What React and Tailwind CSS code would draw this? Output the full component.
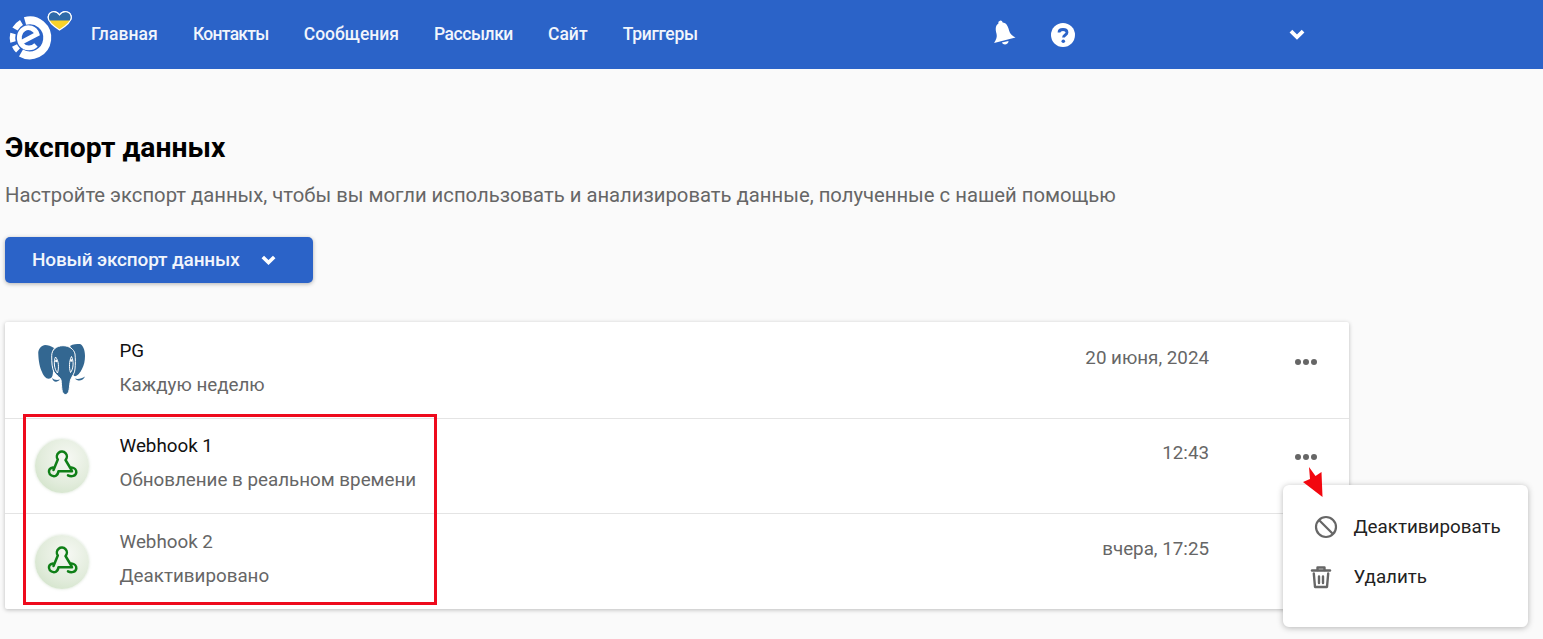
const font = { fontFamily: 'Roboto, "Liberation Sans", sans-serif' };

function Logo() {
  return (
    <svg width="72" height="60" viewBox="0 5 72 60" className="shrink-0">
      <defs>
        <clipPath id="heartTop"><rect x="44" y="6" width="32" height="13.500" /></clipPath>
      </defs>
      <g fill="none" stroke="#fff" strokeLinecap="butt">
        <path d="M25 20 A17.500 17.500 0 1 1 21 52" strokeWidth="8" />
        <path d="M21.500 21.500 A17.500 17.500 0 0 0 15 28" strokeWidth="6" />
        <path d="M13 32.500 A17.500 17.500 0 0 0 13 41" strokeWidth="5.500" />
        <path d="M14.500 44.500 A17.500 17.500 0 0 0 18 49.500" strokeWidth="5.500" />
        <path d="M22 41 L37 33 C35 27 28 25 24 28 C19 31 18 38 21 43 C25 48 32 48 36 44" strokeWidth="4.800" />
      </g>
      <path d="M59.500 29 C50 23 47.500 18 48.500 15 C49.500 10 56 9 59.500 14 C63 9 70 10 71 15 C72 18 69 23 59.500 29 Z" fill="#f7d22a" stroke="#fff" strokeWidth="1.200" />
      <path d="M59.500 29 C50 23 47.500 18 48.500 15 C49.500 10 56 9 59.500 14 C63 9 70 10 71 15 C72 18 69 23 59.500 29 Z" fill="#2f6aa8" stroke="#fff" strokeWidth="1.200" clipPath="url(#heartTop)" />
    </svg>
  );
}

function Bell() {
  return (
    <svg width="26" height="28" viewBox="0 0 26 28">
      <g transform="rotate(-14 13 14)" fill="#fff">
        <circle cx="13" cy="3.500" r="2.200" />
        <path d="M13 3.500 C7 3.500 6.500 9 6.500 13 C6.500 17 4.500 19 2 21.500 L24 21.500 C21.500 19 19.500 17 19.500 13 C19.500 9 19 3.500 13 3.500 Z" />
        <path d="M9.500 23 C10.500 26.500 15.500 26.500 16.500 23 Z" />
      </g>
    </svg>
  );
}

function Help() {
  return (
    <svg width="24" height="24" viewBox="0 0 24 24">
      <circle cx="12" cy="12" r="12" fill="#fff" />
      <path d="M8 9.500 C8 5.500 16 5.500 16 9.500 C16 12 12.500 12 12.500 14.500" fill="none" stroke="#2b63c8" strokeWidth="2.800" />
      <circle cx="12.300" cy="18.300" r="1.800" fill="#2b63c8" />
    </svg>
  );
}

function Chevron({ w = 15 }) {
  return (
    <svg width={w} height={w * 0.67} viewBox="0 0 15 10">
      <path d="M1.800 2 L7.500 7.500 L13.200 2" fill="none" stroke="#fff" strokeWidth="3.600" />
    </svg>
  );
}

function Elephant() {
  return (
    <svg width="52" height="52" viewBox="0 0 52 52">
      <path d="M9 1 C4 2 2 6 2.300 10 C2.500 17 4 24 6 28 C8 33 11 36 15 34 C18 32 17 24 16 15 C16 10 16 7 18 4 C15 2 12 1 9 1 Z" fill="#336791" />
      <path d="M44 0 C47 1 49 6 49 12 C49 17 48 21 46 25 C44 29 41 33 38 32 C36 30 38 20 38 12 C38 8 36 5 34 2 C37 0 41 0 44 0 Z" fill="#336791" />
      <path d="M16 34 C18 36 21 36.500 24 35.500 C21 39 17 38 16 34 Z M39 34.500 C42 35.500 46 34.500 49 32.500 C47 37 42 38 39 34.500 Z" fill="#336791" />
      <path d="M27 1.700 C20 1.700 15.700 6 15.700 11.700 C15.700 19 16 24 18 28 C21 32 24 33 25 36 C26 42 25 50.500 29.500 50.500 C34 50.500 33 42 34.500 36 C36 32 39 29 39 25 C39.500 20 39.500 15 39 10 C38 5 33 1.700 27 1.700 Z" fill="#336791" stroke="#fff" strokeWidth="1" />
      <path d="M19.500 13 C17.500 17 18 25 21.500 29 C23 24 23 17 19.500 13 Z" fill="none" stroke="#fff" strokeWidth="1" />
      <path d="M35.500 12.500 C38 17 37.500 25 34.500 28.500 C33 24 33 17 35.500 12.500 Z" fill="none" stroke="#fff" strokeWidth="1" />
      <circle cx="20.300" cy="17" r="1.200" fill="#fff" />
      <circle cx="35.300" cy="16.500" r="1.200" fill="#fff" />
    </svg>
  );
}

function WebhookIcon() {
  return (
    <div className="w-[54px] h-[54px] rounded-full bg-[radial-gradient(circle_at_60%_35%,#f6f8f3,#e2ecdc_55%,#cadfc1_100%)] flex items-center justify-center shadow-[0_0_3px_rgba(150,180,140,0.4)]">
      <svg width="32" height="32" viewBox="-1 -1 32 32" fill="none" stroke="#0f7f17" strokeWidth="2.500" strokeLinecap="round" strokeLinejoin="round">
        <path d="M6.500 19 L10.800 8.500 A5 5 0 1 1 18.500 9 L24.500 19" />
        <path d="M6 16.500 C3 17 1.800 19 2 21 C2.400 24.300 6 25.800 8.700 24.800 C10.400 24 11.200 22.300 11.500 20.300 L25 20.300" />
        <path d="M24.500 16.500 C27.500 16.800 29.500 19 29.300 21.300 C29 24.800 24.500 26.300 21 24.300" />
      </svg>
    </div>
  );
}

function Dots() {
  return (
    <div className="flex gap-[2.500px] w-[22px]">
      <span className="w-[6px] h-[6px] rounded-full bg-[#666]" />
      <span className="w-[6px] h-[6px] rounded-full bg-[#666]" />
      <span className="w-[6px] h-[6px] rounded-full bg-[#666]" />
    </div>
  );
}

function Row({ icon, title, titleClass, sub, date, rowClass, textPad, datePad, dotsTop }) {
  return (
    <div className={`flex ${rowClass}`}>
      <div className="w-[115px] shrink-0 flex items-center pl-[30px]">{icon}</div>
      <div className={`flex-1 ${textPad}`}>
        <div className={`text-[18.800px] leading-[22px] -ml-[0.5px] ${titleClass}`}>{title}</div>
        <div className="text-[18.800px] leading-[22px] mt-[12px] -ml-[0.5px] text-[#666]">{sub}</div>
      </div>
      <div className={`${datePad} pr-[140px] text-[18.800px] leading-[22px] text-[#666] flex items-start relative`}>
        {date}
        <div className={`absolute right-[32px] ${dotsTop}`}><Dots /></div>
      </div>
    </div>
  );
}

export default function App() {
  const nav = [
    ['Главная', 'tracking-[0.1px]'],
    ['Контакты', 'tracking-[-0.7px]'],
    ['Сообщения', 'tracking-[0px]'],
    ['Рассылки', 'tracking-[-0.45px]'],
    ['Сайт', 'tracking-[0.05px]'],
    ['Триггеры', 'tracking-[-0.3px]'],
  ];
  return (
    <div style={font} className="relative h-[639px] w-[1543px] overflow-hidden bg-[#fafafa]">
      <header className="h-[69px] bg-[#2b63c8] flex items-center">
        <div className="w-[91px] shrink-0 pt-[2px]"><Logo /></div>
        <nav className="flex gap-[35px] w-[902px] shrink-0">
          {nav.map(([n, t]) => (
            <span key={n} className={`text-[17.500px] font-medium text-[#f1f5fc] ${t}`}>{n}</span>
          ))}
        </nav>
        <div className="w-[46px] shrink-0 flex justify-start -translate-y-[2px] -translate-x-[3px]"><Bell /></div>
        <div className="w-[238px] ml-[12px] shrink-0"><Help /></div>
        <Chevron w={16} />
      </header>

      <main className="pl-[5px] w-[1349px]">
        <h1 className="mt-[62px] text-[28.300px] leading-[34px] font-bold text-black">Экспорт данных</h1>
        <p className="mt-[18px] text-[20.250px] leading-[24px] text-[#666]">
          Настройте экспорт данных, чтобы вы могли использовать и анализировать данные, полученные с нашей помощью
        </p>
        <button className="mt-[30px] w-[308px] h-[46px] rounded-[5px] bg-[#2b63c8] shadow-[0_1px_4px_rgba(0,0,0,0.3)] text-[#f1f5fc] font-medium text-[19px] flex items-center pl-[27px] gap-[21.500px]">
          <span className="tracking-[-0.15px]">Новый экспорт данных</span>
          <Chevron />
        </button>

        <section className="mt-[39px] bg-white rounded-[2px] shadow-[0_1px_4px_rgba(0,0,0,0.25)]">
          <Row rowClass="h-[97px] border-b border-[#e4e4e4]" textPad="pt-[18px]" datePad="pt-[25px]" dotsTop="top-[37px]" icon={<div className="ml-[1px]"><Elephant /></div>} title="PG" titleClass="text-[#111]" sub="Каждую неделю" date="20 июня, 2024" />
          <Row rowClass="h-[95px] border-b border-[#e4e4e4]" textPad="pt-[16px]" datePad="pt-[23px]" dotsTop="top-[35px]" icon={<WebhookIcon />} title="Webhook 1" titleClass="text-[#111]" sub="Обновление в реальном времени" date="12:43" />
          <Row rowClass="h-[95px]" textPad="pt-[17px]" datePad="pt-[24px]" dotsTop="top-[35px]" icon={<WebhookIcon />} title="Webhook 2" titleClass="text-[#666]" sub="Деактивировано" date="вчера, 17:25" />
        </section>
      </main>

      <div className="absolute left-[23px] top-[414px] w-[414px] h-[191px] border-[3px] border-[#ee0a1d]" />

      <div className="absolute left-[1283px] top-[485px] w-[245px] h-[142px] bg-white rounded-[6px] shadow-[0_1px_6px_rgba(0,0,0,0.28)] pt-[28px]">
        <div className="flex items-center h-[28px]">
          <svg className="ml-[31px]" width="24" height="24" viewBox="0 0 24 24" fill="none" stroke="#666" strokeWidth="2.200">
            <circle cx="12" cy="12" r="10" />
            <path d="M5 5 L19 19" />
          </svg>
          <span className="ml-[15.500px] text-[18.800px] text-[#222]">Деактивировать</span>
        </div>
        <div className="flex items-center h-[28px] mt-[22px]">
          <svg className="ml-[26px]" width="24" height="24" viewBox="0 0 24 24" fill="none" stroke="#666" strokeWidth="2.400" strokeLinejoin="round" strokeLinecap="round">
            <path d="M3 5.500 H21" />
            <path d="M8.500 5 V2.500 H15.500 V5" />
            <path d="M4.800 8.500 L6 22 H18 L19.200 8.500" />
            <path d="M10 11.500 V18 M14 11.500 V18" />
          </svg>
          <span className="ml-[20.500px] text-[18.800px] text-[#222]">Удалить</span>
        </div>
      </div>

      <svg className="absolute left-[1302px] top-[466px]" width="24" height="32" viewBox="0 0 24 32">
        <path d="M7 1 L13.500 10 L19.500 6 L20.500 31 L1 16 L8 13 Z" fill="#f2070f" />
      </svg>
    </div>
  );
}
